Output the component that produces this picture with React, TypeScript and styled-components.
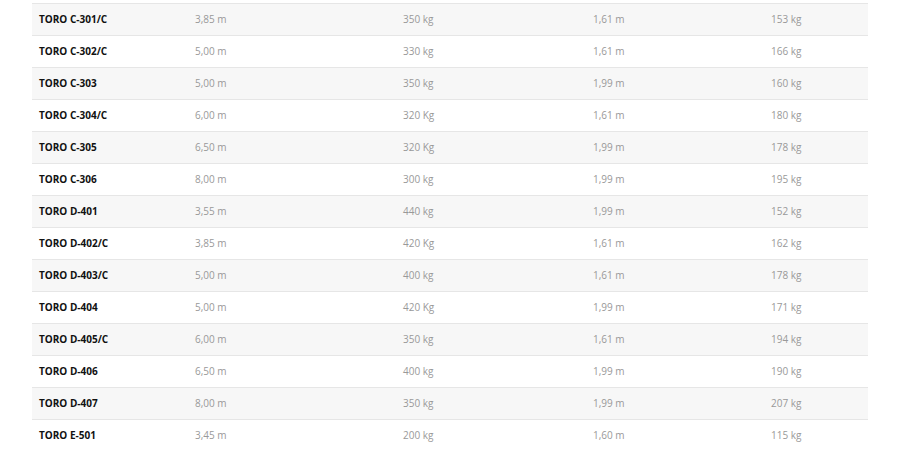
import React from "react";
import styled, { createGlobalStyle } from "styled-components";

const Global = createGlobalStyle`
  html, body { margin: 0; padding: 0; background: #fff; }
  body { font-family: "Open Sans", "Liberation Sans", sans-serif; }
`;

const Page = styled.div`
  padding: 3px 51px 0 32px;
  height: 449px;
  overflow: hidden;
  box-sizing: border-box;
`;

const Table = styled.table`
  width: 836px;
  border-collapse: collapse;
  table-layout: fixed;
  font-size: 10px;
  line-height: 14px;
`;

const Row = styled.tr<{ $alt: boolean }>`
  background: ${(p) => (p.$alt ? "#f7f7f7" : "#ffffff")};
  border-top: 1px solid #e6e6e6;
  height: 32px;
`;

const Cell = styled.td<{ $w: number; $strong?: boolean }>`
  width: ${(p) => p.$w}px;
  padding: 0 7px 1px;
  box-sizing: border-box;
  vertical-align: middle;
  color: ${(p) => (p.$strong ? "#111" : "#999")};
  font-weight: ${(p) => (p.$strong ? 700 : 400)};
  white-space: nowrap;
`;

const widths = [156, 208, 190, 178, 104];

const rows: string[][] = [
  ["TORO C-301/C", "3,85 m", "350 kg", "1,61 m", "153 kg"],
  ["TORO C-302/C", "5,00 m", "330 kg", "1,61 m", "166 kg"],
  ["TORO C-303", "5,00 m", "350 kg", "1,99 m", "160 kg"],
  ["TORO C-304/C", "6,00 m", "320 Kg", "1,61 m", "180 kg"],
  ["TORO C-305", "6,50 m", "320 Kg", "1,99 m", "178 kg"],
  ["TORO C-306", "8,00 m", "300 kg", "1,99 m", "195 kg"],
  ["TORO D-401", "3,55 m", "440 kg", "1,99 m", "152 kg"],
  ["TORO D-402/C", "3,85 m", "420 Kg", "1,61 m", "162 kg"],
  ["TORO D-403/C", "5,00 m", "400 kg", "1,61 m", "178 kg"],
  ["TORO D-404", "5,00 m", "420 Kg", "1,99 m", "171 kg"],
  ["TORO D-405/C", "6,00 m", "350 kg", "1,61 m", "194 kg"],
  ["TORO D-406", "6,50 m", "400 kg", "1,99 m", "190 kg"],
  ["TORO D-407", "8,00 m", "350 kg", "1,99 m", "207 kg"],
  ["TORO E-501", "3,45 m", "200 kg", "1,60 m", "115 kg"],
];

export default function App() {
  return (
    <>
      <Global />
      <Page>
        <Table>
          <tbody>
            {rows.map((r, i) => (
              <Row key={r[0]} $alt={i % 2 === 0}>
                {r.map((c, j) => (
                  <Cell key={j} $w={widths[j]} $strong={j === 0}>
                    {c}
                  </Cell>
                ))}
              </Row>
            ))}
          </tbody>
        </Table>
      </Page>
    </>
  );
}
